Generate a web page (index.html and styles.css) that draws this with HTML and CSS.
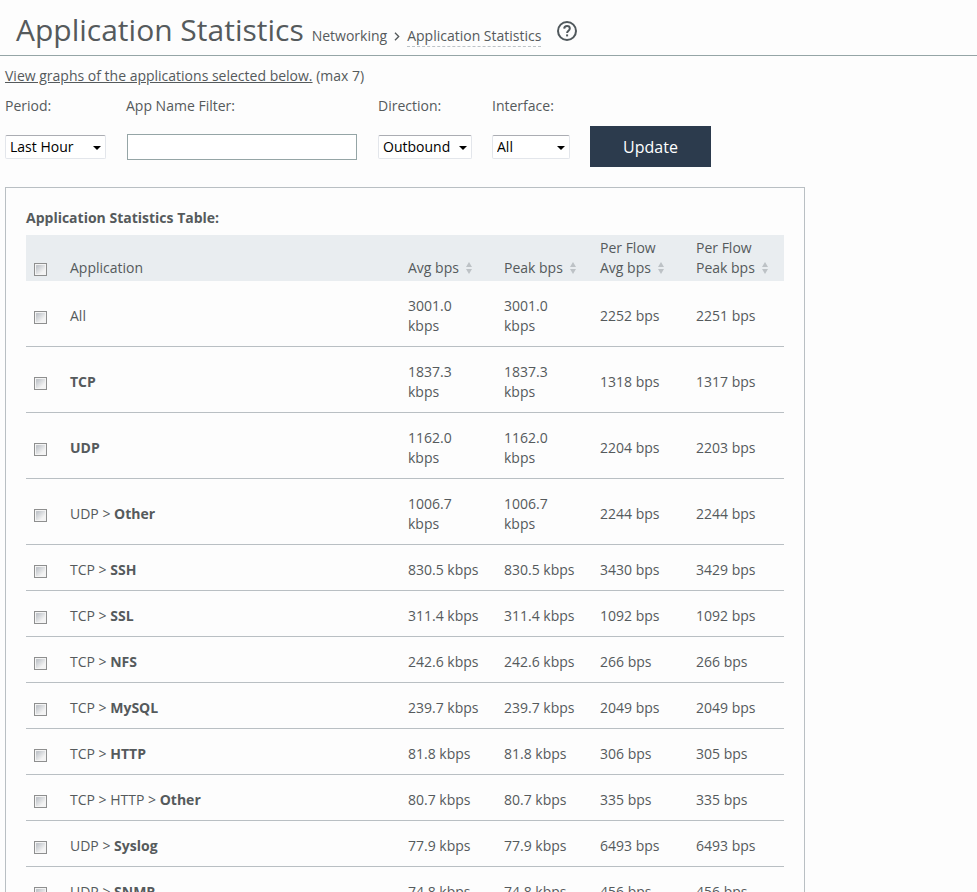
FILE: index.html
```html
<!DOCTYPE html>
<html lang="en">
<head>
<meta charset="utf-8">
<title>Application Statistics</title>
<link rel="stylesheet" href="styles.css">
</head>
<body>
<header class="page-header">
  <h1>Application Statistics</h1>
  <nav class="breadcrumb" aria-label="Breadcrumb">
    <a href="#">Networking</a>
    <svg class="chevron" viewBox="0 0 5 8" aria-hidden="true"><path d="M.7.7 4 4 .7 7.3"/></svg>
    <a class="current" href="#">Application Statistics</a>
  </nav>
  <a class="help" href="#" aria-label="Help">
    <svg viewBox="0 0 20 20" aria-hidden="true"><circle cx="10" cy="10" r="9"/><path d="M7.2 7.6C7.3 5.8 8.5 5 10 5s2.8.9 2.8 2.4c0 2.3-2.7 2.2-2.7 4.6"/><path d="M9.1 14.4h2"/></svg>
  </a>
</header>
<main>
  <p class="intro"><a href="#">View graphs of the applications selected below.</a> (max 7)</p>
  <form class="filters">
    <div class="field">
      <label for="period">Period:</label>
      <div class="control"><span class="select period"><select id="period"><option>Last Hour</option></select></span></div>
    </div>
    <div class="field">
      <label for="name">App Name Filter:</label>
      <div class="control"><input class="text" type="text" id="name"></div>
    </div>
    <div class="field">
      <label for="direction">Direction:</label>
      <div class="control"><span class="select direction"><select id="direction"><option>Outbound</option></select></span></div>
    </div>
    <div class="field">
      <label for="interface">Interface:</label>
      <div class="control"><span class="select interface"><select id="interface"><option>All</option></select></span></div>
    </div>
    <button type="button">Update</button>
  </form>
  <section class="card">
    <h2 id="table-title">Application Statistics Table:</h2>
    <table aria-labelledby="table-title">
      <thead>
        <tr>
          <th class="check"><input type="checkbox" aria-label="Select all"></th>
          <th>Application</th>
          <th class="rate">Avg bps<svg class="sort" viewBox="0 0 6 12" aria-hidden="true"><path d="M0 5 3 0l3 5zM0 7h6l-3 5z"/></svg></th>
          <th class="rate">Peak bps<svg class="sort" viewBox="0 0 6 12" aria-hidden="true"><path d="M0 5 3 0l3 5zM0 7h6l-3 5z"/></svg></th>
          <th class="rate">Per Flow<br>Avg bps<svg class="sort" viewBox="0 0 6 12" aria-hidden="true"><path d="M0 5 3 0l3 5zM0 7h6l-3 5z"/></svg></th>
          <th class="rate">Per Flow<br>Peak bps<svg class="sort" viewBox="0 0 6 12" aria-hidden="true"><path d="M0 5 3 0l3 5zM0 7h6l-3 5z"/></svg></th>
        </tr>
      </thead>
      <tbody>
        <tr><td class="check"><input type="checkbox" aria-label="All"></td><td>All</td><td>3001.0 kbps</td><td>3001.0 kbps</td><td>2252 bps</td><td>2251 bps</td></tr>
        <tr><td class="check"><input type="checkbox" aria-label="TCP"></td><td><b>TCP</b></td><td>1837.3 kbps</td><td>1837.3 kbps</td><td>1318 bps</td><td>1317 bps</td></tr>
        <tr><td class="check"><input type="checkbox" aria-label="UDP"></td><td><b>UDP</b></td><td>1162.0 kbps</td><td>1162.0 kbps</td><td>2204 bps</td><td>2203 bps</td></tr>
        <tr><td class="check"><input type="checkbox" aria-label="UDP Other"></td><td>UDP &gt; <b>Other</b></td><td>1006.7 kbps</td><td>1006.7 kbps</td><td>2244 bps</td><td>2244 bps</td></tr>
        <tr><td class="check"><input type="checkbox" aria-label="SSH"></td><td>TCP &gt; <b>SSH</b></td><td>830.5 kbps</td><td>830.5 kbps</td><td>3430 bps</td><td>3429 bps</td></tr>
        <tr><td class="check"><input type="checkbox" aria-label="SSL"></td><td>TCP &gt; <b>SSL</b></td><td>311.4 kbps</td><td>311.4 kbps</td><td>1092 bps</td><td>1092 bps</td></tr>
        <tr><td class="check"><input type="checkbox" aria-label="NFS"></td><td>TCP &gt; <b>NFS</b></td><td>242.6 kbps</td><td>242.6 kbps</td><td>266 bps</td><td>266 bps</td></tr>
        <tr><td class="check"><input type="checkbox" aria-label="MySQL"></td><td>TCP &gt; <b>MySQL</b></td><td>239.7 kbps</td><td>239.7 kbps</td><td>2049 bps</td><td>2049 bps</td></tr>
        <tr><td class="check"><input type="checkbox" aria-label="HTTP"></td><td>TCP &gt; <b>HTTP</b></td><td>81.8 kbps</td><td>81.8 kbps</td><td>306 bps</td><td>305 bps</td></tr>
        <tr><td class="check"><input type="checkbox" aria-label="HTTP Other"></td><td>TCP &gt; HTTP &gt; <b>Other</b></td><td>80.7 kbps</td><td>80.7 kbps</td><td>335 bps</td><td>335 bps</td></tr>
        <tr><td class="check"><input type="checkbox" aria-label="Syslog"></td><td>UDP &gt; <b>Syslog</b></td><td>77.9 kbps</td><td>77.9 kbps</td><td>6493 bps</td><td>6493 bps</td></tr>
        <tr><td class="check"><input type="checkbox" aria-label="SNMP"></td><td>UDP &gt; <b>SNMP</b></td><td>74.8 kbps</td><td>74.8 kbps</td><td>456 bps</td><td>456 bps</td></tr>
      </tbody>
    </table>
  </section>
</main>
</body>
</html>
```
FILE: styles.css
```css
* { box-sizing: border-box; }

body {
  margin: 0;
  background: #fdfdfd;
  color: #555a5c;
  font: 14px/20px "Open Sans", sans-serif;
}

a { color: inherit; }

.page-header {
  display: flex;
  align-items: baseline;
  padding: 10px 16px 5px;
  border-bottom: 1px solid #95a5a6;
}

h1 {
  margin: 0;
  font-size: 30px;
  font-weight: 400;
  line-height: 40px;
}

.breadcrumb {
  display: flex;
  align-items: center;
  gap: 7px;
  margin-left: 8px;
}

.breadcrumb a {
  text-decoration: none;
  border-bottom: 1px solid transparent;
}

.breadcrumb .current { border-bottom: 1px dashed #bdc3c7; }

.chevron {
  width: 6px;
  height: 9px;
  fill: none;
  stroke: #555a5c;
  stroke-width: 1.2;
}

.help {
  align-self: center;
  height: 20px;
  margin: 2px 0 0 16px;
}

.help svg {
  display: block;
  width: 20px;
  height: 20px;
  fill: none;
  stroke: #50585c;
  stroke-width: 2;
}

main { padding: 10px 5px 20px; }

.intro { margin: 0 0 10px; }

.filters {
  display: flex;
  flex-wrap: wrap;
  align-items: flex-end;
  gap: 20px;
  margin-bottom: 20px;
}

.field {
  display: flex;
  flex-direction: column;
  gap: 10px;
}

.control {
  display: flex;
  align-items: center;
  height: 41px;
}

.select { position: relative; }

.select::after {
  content: "";
  position: absolute;
  right: 5px;
  top: 11px;
  border: 4px solid transparent;
  border-top-color: #000;
  border-bottom: 0;
  pointer-events: none;
}

.period { width: 101px; }
.direction { width: 94px; }
.interface { width: 78px; }

select {
  appearance: none;
  display: block;
  width: 100%;
  height: 24px;
  padding: 0 4px;
  border: 1px solid #e3e6eb;
  border-top-color: #abadb3;
  border-radius: 2px;
  background: #fff;
  color: #000;
  font: inherit;
}

.text {
  width: 230px;
  height: 26px;
  margin: 0 1px;
  padding: 0 4px;
  border: 1px solid #95a5a6;
  background: #fff;
  font: inherit;
}

button {
  width: 121px;
  height: 41px;
  padding: 0;
  border: 0;
  background: #2c3b4d;
  color: #fff;
  font: 16px/20px "Open Sans", sans-serif;
}

.card {
  max-width: 800px;
  padding: 20px;
  border: 1px solid #b9bfc3;
}

h2 {
  margin: 0 0 7px;
  font-size: 14px;
  line-height: 20px;
}

table {
  width: 100%;
  border-collapse: separate;
  border-spacing: 0;
  table-layout: fixed;
}

th, td {
  padding: 15px 12px 10px 8px;
  text-align: left;
  font-weight: 400;
}

th {
  padding: 3px 8px;
  background: #e9edf0;
  vertical-align: bottom;
  white-space: nowrap;
}

td { border-bottom: 1px solid #b9bfc3; }

.check {
  width: 36px;
  padding-right: 0;
}

.rate { width: 96px; }

input[type="checkbox"] {
  appearance: none;
  display: block;
  width: 13px;
  height: 13px;
  margin: 2px 0 0;
  border: 1px solid #8e8f8f;
  background: linear-gradient(135deg, #c3c7cc 15%, #f3f3f3 75%) center / 9px 9px no-repeat #f4f4f4;
}

th input[type="checkbox"] { margin-bottom: 2px; }

.sort {
  width: 6px;
  height: 12px;
  margin-left: 7px;
  vertical-align: -1px;
  fill: #bdc2c6;
}
```
